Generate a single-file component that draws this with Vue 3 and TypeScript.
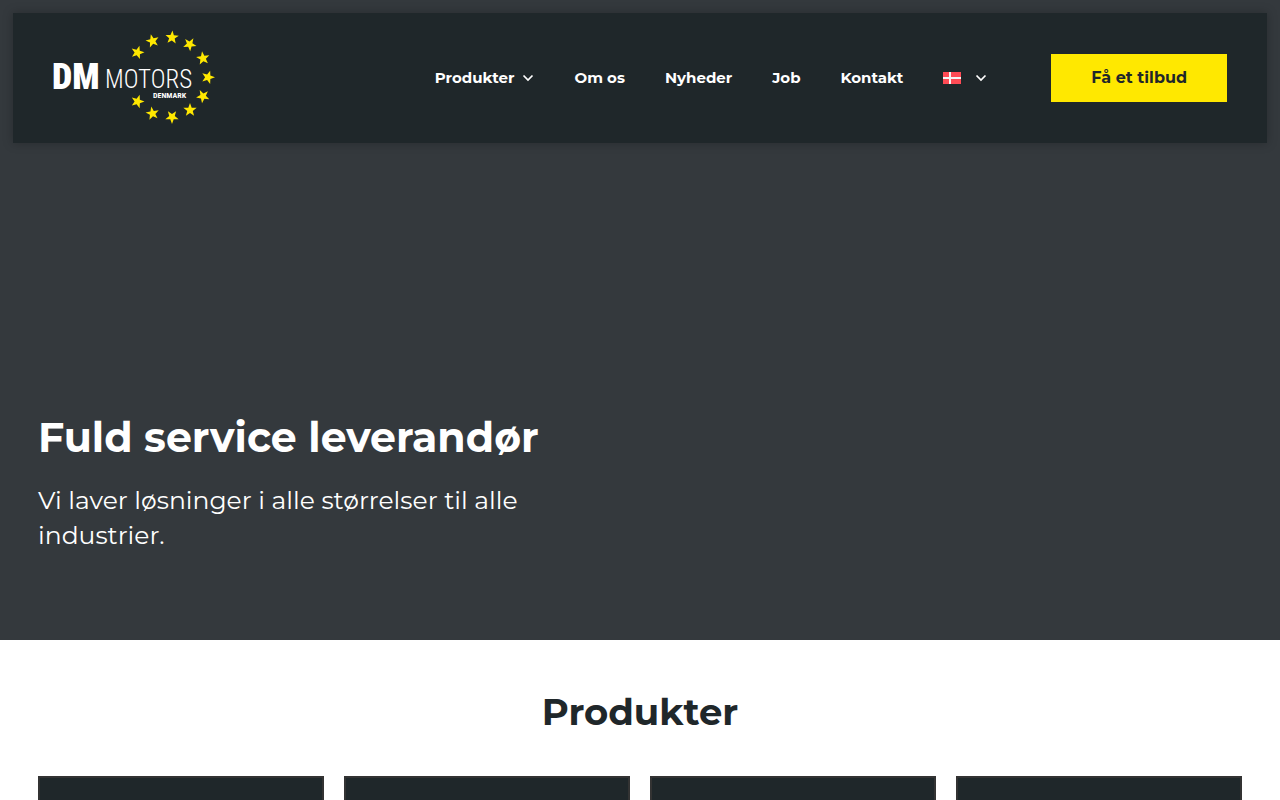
<script setup lang="ts">
interface NavItem {
  label: string
  href: string
  hasMenu?: boolean
}

interface Star {
  x: number
  y: number
  angle: number
}

const navItems: NavItem[] = [
  { label: 'Produkter', href: '#produkter', hasMenu: true },
  { label: 'Om os', href: '#om-os' },
  { label: 'Nyheder', href: '#nyheder' },
  { label: 'Job', href: '#job' },
  { label: 'Kontakt', href: '#kontakt' },
]

const stars: Star[] = [
  { x: 84.5, y: 22.5, angle: 16 },
  { x: 99.5, y: 11, angle: -14 },
  { x: 119, y: 7.5, angle: 4 },
  { x: 136.7, y: 14.3, angle: -40 },
  { x: 150, y: 28.3, angle: -8 },
  { x: 155, y: 47.3, angle: 18 },
  { x: 150, y: 66.3, angle: -28 },
  { x: 137, y: 80, angle: 0 },
  { x: 119, y: 87, angle: -36 },
  { x: 99.5, y: 83.5, angle: -10 },
  { x: 84.5, y: 71.5, angle: 18 },
]

const starPoints = Array.from({ length: 10 }, (_, i) => {
  const radius = i % 2 === 0 ? 7 : 2.9
  const a = (i * Math.PI) / 5
  return `${(radius * Math.sin(a)).toFixed(2)},${(-radius * Math.cos(a)).toFixed(2)}`
}).join(' ')

const cards = [1, 2, 3, 4]
</script>

<template>
  <div class="page">
    <section class="hero">
      <header class="header">
        <a class="logo" href="#" aria-label="DM Motors Denmark">
          <svg width="164" height="96" viewBox="0 0 164 96" aria-hidden="true">
            <polygon
              v-for="(s, i) in stars"
              :key="i"
              class="star"
              :points="starPoints"
              :transform="`translate(${s.x} ${s.y}) rotate(${s.angle})`"
            />
            <text class="logo-dm" x="-1" y="59">DM</text>
            <text class="logo-motors" x="52" y="58">MOTORS</text>
            <text class="logo-denmark" x="100" y="68">DENMARK</text>
          </svg>
        </a>
        <nav class="nav" aria-label="Hovedmenu">
          <a v-for="item in navItems" :key="item.label" class="nav-link" :href="item.href">
            {{ item.label }}
            <svg v-if="item.hasMenu" class="chevron" width="12" height="8" viewBox="0 0 12 8" aria-hidden="true">
              <path d="M1.5 1.5 L6 6 L10.5 1.5" />
            </svg>
          </a>
          <a class="nav-link language" href="#da" aria-label="Dansk">
            <svg width="18" height="12" viewBox="0 0 18 12" aria-hidden="true">
              <rect width="18" height="12" fill="#ff4b55" />
              <path d="M7 0V12M0 6H18" stroke="#f5f5f5" stroke-width="2" />
            </svg>
            <svg class="chevron" width="12" height="8" viewBox="0 0 12 8" aria-hidden="true">
              <path d="M1.5 1.5 L6 6 L10.5 1.5" />
            </svg>
          </a>
        </nav>
        <a class="cta" href="#tilbud">Få et tilbud</a>
      </header>
      <div class="hero-text">
        <h1>Fuld service leverandør</h1>
        <p>Vi laver løsninger i alle størrelser til alle industrier.</p>
      </div>
    </section>
    <section id="produkter" class="products">
      <h2>Produkter</h2>
      <div class="grid">
        <article v-for="card in cards" :key="card" class="card"></article>
      </div>
    </section>
  </div>
</template>

<style>
body {
  margin: 0;
}
</style>

<style scoped>
.page {
  font-family: Montserrat, Inter, "Liberation Sans", sans-serif;
  color: #1f272a;
  background: #fff;
}
.hero {
  display: flex;
  flex-direction: column;
  justify-content: space-between;
  box-sizing: border-box;
  min-height: 80vh;
  padding: 13px 13px 87px;
  background: #34393d;
}
.header {
  display: flex;
  align-items: center;
  box-sizing: border-box;
  min-height: 130px;
  padding: 16px 40px;
  background: #1f272a;
  box-shadow: 0 0 10px rgba(0, 0, 0, 0.25);
}
.logo svg {
  display: block;
  overflow: visible;
}
.star {
  fill: #ffe800;
}
.logo text {
  font-family: "Roboto Condensed", "Liberation Sans Narrow", "Liberation Sans", sans-serif;
  fill: #fff;
}
.logo .logo-dm {
  font-size: 36px;
  font-weight: 900;
}
.logo .logo-motors {
  font-size: 25px;
  font-weight: 300;
}
.logo .logo-denmark {
  font-size: 8px;
  font-weight: 700;
}
.nav {
  display: flex;
  align-items: center;
  gap: 40px;
  margin-left: auto;
}
.nav-link {
  display: flex;
  align-items: center;
  gap: 8px;
  color: #fff;
  font-size: 15px;
  font-weight: 700;
  line-height: 20px;
  text-decoration: none;
}
.language {
  gap: 14px;
}
.chevron {
  fill: none;
  stroke: #fff;
  stroke-width: 1.7;
}
.cta {
  margin-left: 64px;
  padding: 14px 40px;
  background: #ffe800;
  color: #1f272a;
  font-size: 16px;
  font-weight: 700;
  line-height: 20px;
  text-decoration: none;
}
.hero-text {
  max-width: 540px;
  padding-left: 25px;
  color: #fff;
}
h1 {
  margin: 0 0 20px;
  font-size: 41px;
  font-weight: 700;
  line-height: 52px;
}
.hero-text p {
  margin: 0;
  font-size: 25px;
  font-weight: 400;
  line-height: 35px;
}
.products {
  padding: 48px 38px;
}
h2 {
  margin: 0 0 40px;
  font-size: 37px;
  font-weight: 700;
  line-height: 48px;
  text-align: center;
}
.grid {
  display: grid;
  grid-template-columns: repeat(4, 1fr);
  gap: 20px;
}
.card {
  min-height: 280px;
  border: 2px solid #333;
  background: #1f272a;
}
</style>
